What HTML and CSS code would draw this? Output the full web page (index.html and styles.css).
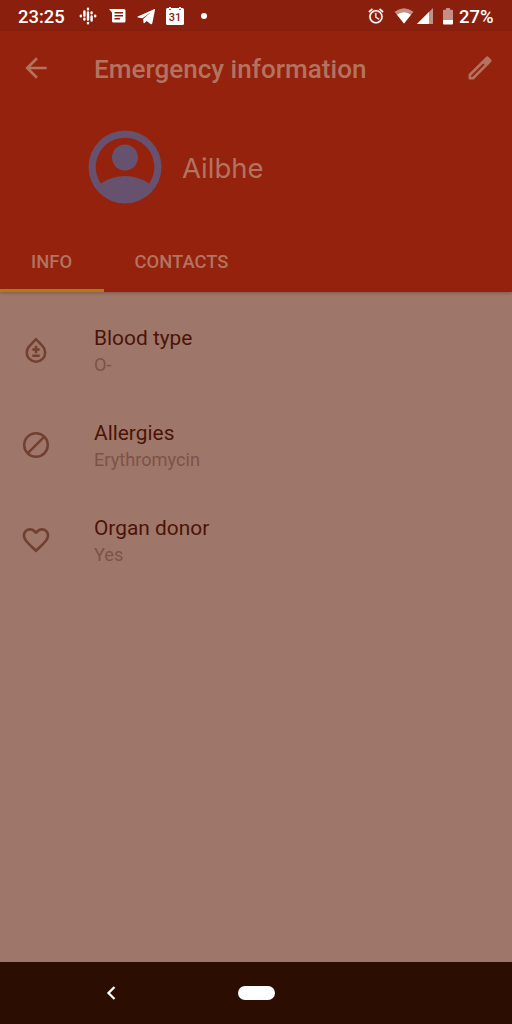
FILE: index.html
```html
<!DOCTYPE html>
<html lang="en">
<head>
    <meta charset="UTF-8">
    <meta name="viewport" content="width=device-width, initial-scale=1.0">
    <title>Emergency information</title>
    <link rel="stylesheet" href="styles.css">
</head>
<body>

    <div class="status-bar">
        <span class="clock">23:25</span>
        <svg class="podcast" width="18" height="20" viewBox="0 0 20 20" stroke="#fff" stroke-width="2.7" stroke-linecap="round">
            <path d="M10 2v.4M10 6v8M10 17.6v.4M6 5v4.6M6 13v1M14 6v1M14 10.6V15M2 9.8v.4M18 9.8v.4"/>
        </svg>
        <svg class="message" width="17" height="16" viewBox="0 0 17 16">
            <path fill="#fff" fill-rule="evenodd" d="M0 1h15q1.500 0 1.500 1.500V13q0 1.500-1.500 1.500H4.500Q3 14.500 3 13V4.500zM5.500 4v1.500h8.500V4zM5.500 7v1.500h8.500V7zM5.500 10v1.500h5.500V10z"/>
        </svg>
        <svg class="telegram" width="19" height="18" viewBox="0 0 19 18">
            <path fill="#fff" d="M.8 9.400L17 2.200q1.200-.4 1 .9l-2.700 13.200q-.4 1.500-1.700.7L9.500 14l-2 2q-.9.800-1-.5l-.3-3.400 7.500-6.800-8.200 5.900L.8 10.400q-.9-.5 0-1z"/>
        </svg>
        <svg class="calendar" width="18" height="19" viewBox="0 0 18 19">
            <path fill="#fff" d="M0 2.500Q0 1 1.500 1H3V0h2v1h8V0h2v1h1.500Q18 1 18 2.500v14q0 1.500-1.500 1.500h-15Q0 18 0 16.500z"/>
            <circle cx="4" cy="2.500" r=".8" fill="#8b1f0d"/>
            <circle cx="14" cy="2.500" r=".8" fill="#8b1f0d"/>
            <text x="9" y="14" text-anchor="middle" class="calendar-day">31</text>
        </svg>
        <span class="more-dot"></span>
        <svg class="alarm" width="18" height="18" viewBox="0 0 24 24">
            <path fill="#fff" stroke="#fff" stroke-width=".3" d="M22 5.720l-4.600-3.860-1.290 1.530 4.600 3.860L22 5.720zM7.880 3.390L6.600 1.860 2 5.710l1.290 1.530 4.590-3.850zM12.500 8H11v6l4.750 2.850.75-1.230-4-2.370V8zM12 4c-4.970 0-9 4.030-9 9s4.020 9 9 9a9 9 0 0 0 0-18zm0 16c-3.870 0-7-3.130-7-7s3.130-7 7-7 7 3.130 7 7-3.130 7-7 7z"/>
        </svg>
        <svg class="wifi" width="20" height="16" viewBox="0 0 20 17">
            <path fill="#fff" opacity=".5" d="M0 4Q10-3.500 20 4L10 16.500z"/>
            <path fill="#fff" d="M2.600 7.300Q10 1.500 17.400 7.300L10 16.500z"/>
        </svg>
        <svg class="signal" width="16" height="17" viewBox="0 0 16 17">
            <path fill="#fff" opacity=".5" d="M16 0v16H0z"/>
            <path fill="#fff" d="M12 4v12H0z"/>
        </svg>
        <svg class="battery" width="10" height="17" viewBox="0 0 10 17">
            <path fill="#fff" opacity=".5" d="M3 0h4v1.700h2q1 0 1 1V12H0V2.700q0-1 1-1h2z"/>
            <path fill="#fff" d="M0 12h10v3.500q0 1-1 1H1q-1 0-1-1z"/>
        </svg>
        <span class="percent">27%</span>
    </div>

    <header class="header">
        <div class="toolbar">
            <svg width="32" height="32" viewBox="0 0 24 24">
                <path fill="currentColor" d="M20 11H7.830l5.590-5.590L12 4l-8 8 8 8 1.410-1.410L7.830 13H20v-2z"/>
            </svg>
            <h1>Emergency information</h1>
            <svg width="32" height="32" viewBox="-.6 -.6 25.200 25.200">
                <path fill="currentColor" fill-rule="evenodd" d="M3 17V20.200q0 .8.800.8H7L20.700 7.300q1-1 0-2L18.700 3.300q-1-1-2 0zM5 18L14.600 8.400l1 1L6 19H5z"/>
            </svg>
        </div>

        <div class="profile">
            <svg class="avatar" width="74" height="74" viewBox="0 0 74 74">
                <path fill="currentColor" fill-rule="evenodd" d="M37 .5a36.500 36.500 0 1 0 0 73 36.500 36.500 0 1 0 0-73zM12.800 53.500a29.300 29.300 0 1 1 48.400 0Q50.500 46 37 46t-24.200 7.500z"/>
                <circle cx="37" cy="27.500" r="13" fill="currentColor"/>
            </svg>
            <span class="name">Ailbhe</span>
        </div>

        <nav class="tabs">
            <a class="tab active">INFO</a>
            <a class="tab">CONTACTS</a>
        </nav>
    </header>

    <main class="info-list">
        <div class="info-row">
            <svg width="32" height="32" viewBox="0 0 32 32" fill="none" stroke="currentColor" stroke-width="2.500">
                <path d="M16 5.200l-6.400 6.700a9.200 9.200 0 1 0 12.800 0z"/>
                <path d="M16 11.800v7.400M12.300 15.500h7.400M12.300 21.700h7.400"/>
            </svg>
            <div class="info-text">
                <div class="label">Blood type</div>
                <div class="value">O-</div>
            </div>
        </div>
        <div class="info-row">
            <svg width="32" height="32" viewBox="0 0 32 32" fill="none" stroke="currentColor" stroke-width="2.500">
                <circle cx="16" cy="16" r="11.800"/>
                <path d="M7.600 24.400L24.400 7.600"/>
            </svg>
            <div class="info-text">
                <div class="label">Allergies</div>
                <div class="value">Erythromycin</div>
            </div>
        </div>
        <div class="info-row">
            <svg width="32" height="32" viewBox="0 0 24 24">
                <path fill="currentColor" d="M16.500 3c-1.740 0-3.410.81-4.500 2.090C10.910 3.810 9.240 3 7.500 3 4.420 3 2 5.420 2 8.500c0 3.780 3.400 6.860 8.550 11.540L12 21.350l1.450-1.320C18.600 15.360 22 12.280 22 8.500 22 5.420 19.580 3 16.500 3zm-4.400 15.550l-.1.100-.1-.1C7.140 14.240 4 11.390 4 8.500 4 6.500 5.500 5 7.500 5c1.540 0 3.040.99 3.570 2.360h1.870C13.460 5.990 14.960 5 16.500 5c2 0 3.500 1.500 3.500 3.500 0 2.890-3.140 5.740-7.900 10.050z"/>
            </svg>
            <div class="info-text">
                <div class="label">Organ donor</div>
                <div class="value">Yes</div>
            </div>
        </div>
    </main>

    <footer class="nav-bar">
        <svg class="nav-back" width="10" height="14" viewBox="0 0 10 14" fill="none" stroke="#fff" stroke-width="2.300">
            <path d="M8.500 1l-6 6 6 6"/>
        </svg>
        <span class="nav-home"></span>
    </footer>

</body>
</html>
```

FILE: styles.css
```css
* {
    box-sizing: border-box;
}

body {
    display: flex;
    flex-direction: column;
    height: 1024px;
    margin: 0;
    font-family: Roboto, sans-serif;
    background-color: #9e776a;
    overflow: hidden;
}

svg {
    display: block;
    flex: none;
}

.status-bar {
    display: flex;
    align-items: center;
    height: 31px;
    padding: 1px 18.5px 0 18px;
    background-color: #8b1f0d;
    color: #fff;
    font-size: 18.4px;
    font-weight: 500;
}

.clock {
    width: 61px;
}

.message {
    margin-left: 12px;
}

.telegram {
    margin-left: 11px;
}

.calendar {
    margin-left: 10px;
}

.calendar-day {
    font-size: 11px;
    font-weight: 500;
    fill: #8b1f0d;
}

.more-dot {
    width: 6px;
    height: 6px;
    margin-left: 17px;
    border-radius: 50%;
    background-color: #fff;
}

.alarm {
    margin-left: auto;
}

.wifi {
    margin-left: 9px;
}

.signal {
    margin-left: 3px;
}

.battery {
    margin-left: 10px;
}

.percent {
    margin-left: 6px;
}

.header {
    height: 261px;
    background-color: #94220d;
    color: #b37360;
    box-shadow: 0 1px 3px rgba(60, 20, 10, 0.3);
}

.toolbar {
    display: flex;
    align-items: center;
    height: 74px;
    padding: 0 16px 0 20px;
}

.toolbar h1 {
    flex: 1;
    margin: 2px 0 0 42px;
    font-size: 26.1px;
    font-weight: 500;
}

.profile {
    display: flex;
    align-items: center;
    height: 124px;
    padding-left: 88px;
}

.avatar {
    color: #66526e;
}

.name {
    margin: 1px 0 0 20px;
    font-family: Inter, sans-serif;
    font-size: 27.5px;
    font-weight: 400;
}

.tabs {
    display: flex;
    height: 63px;
}

.tab {
    padding: 22px 31.5px 0 31px;
    font-size: 18.4px;
    font-weight: 500;
}

.active {
    border-bottom: 3px solid #ac7d14;
}

.info-list {
    flex: 1;
    padding: 11px 20px 0;
}

.info-row {
    display: flex;
    align-items: center;
    height: 94.8px;
    color: #724031;
}

.info-text {
    margin: 3px 0 0 42px;
}

.label {
    color: #4b1408;
    font-size: 20.9px;
    line-height: 27px;
}

.value {
    color: #7f5247;
    font-size: 18.2px;
    line-height: 26px;
}

.nav-bar {
    display: flex;
    align-items: center;
    height: 62px;
    padding-left: 106px;
    background-color: #2c0d01;
}

.nav-home {
    width: 37px;
    height: 14px;
    margin-left: 122px;
    border-radius: 7px;
    background-color: #fff;
}
```
